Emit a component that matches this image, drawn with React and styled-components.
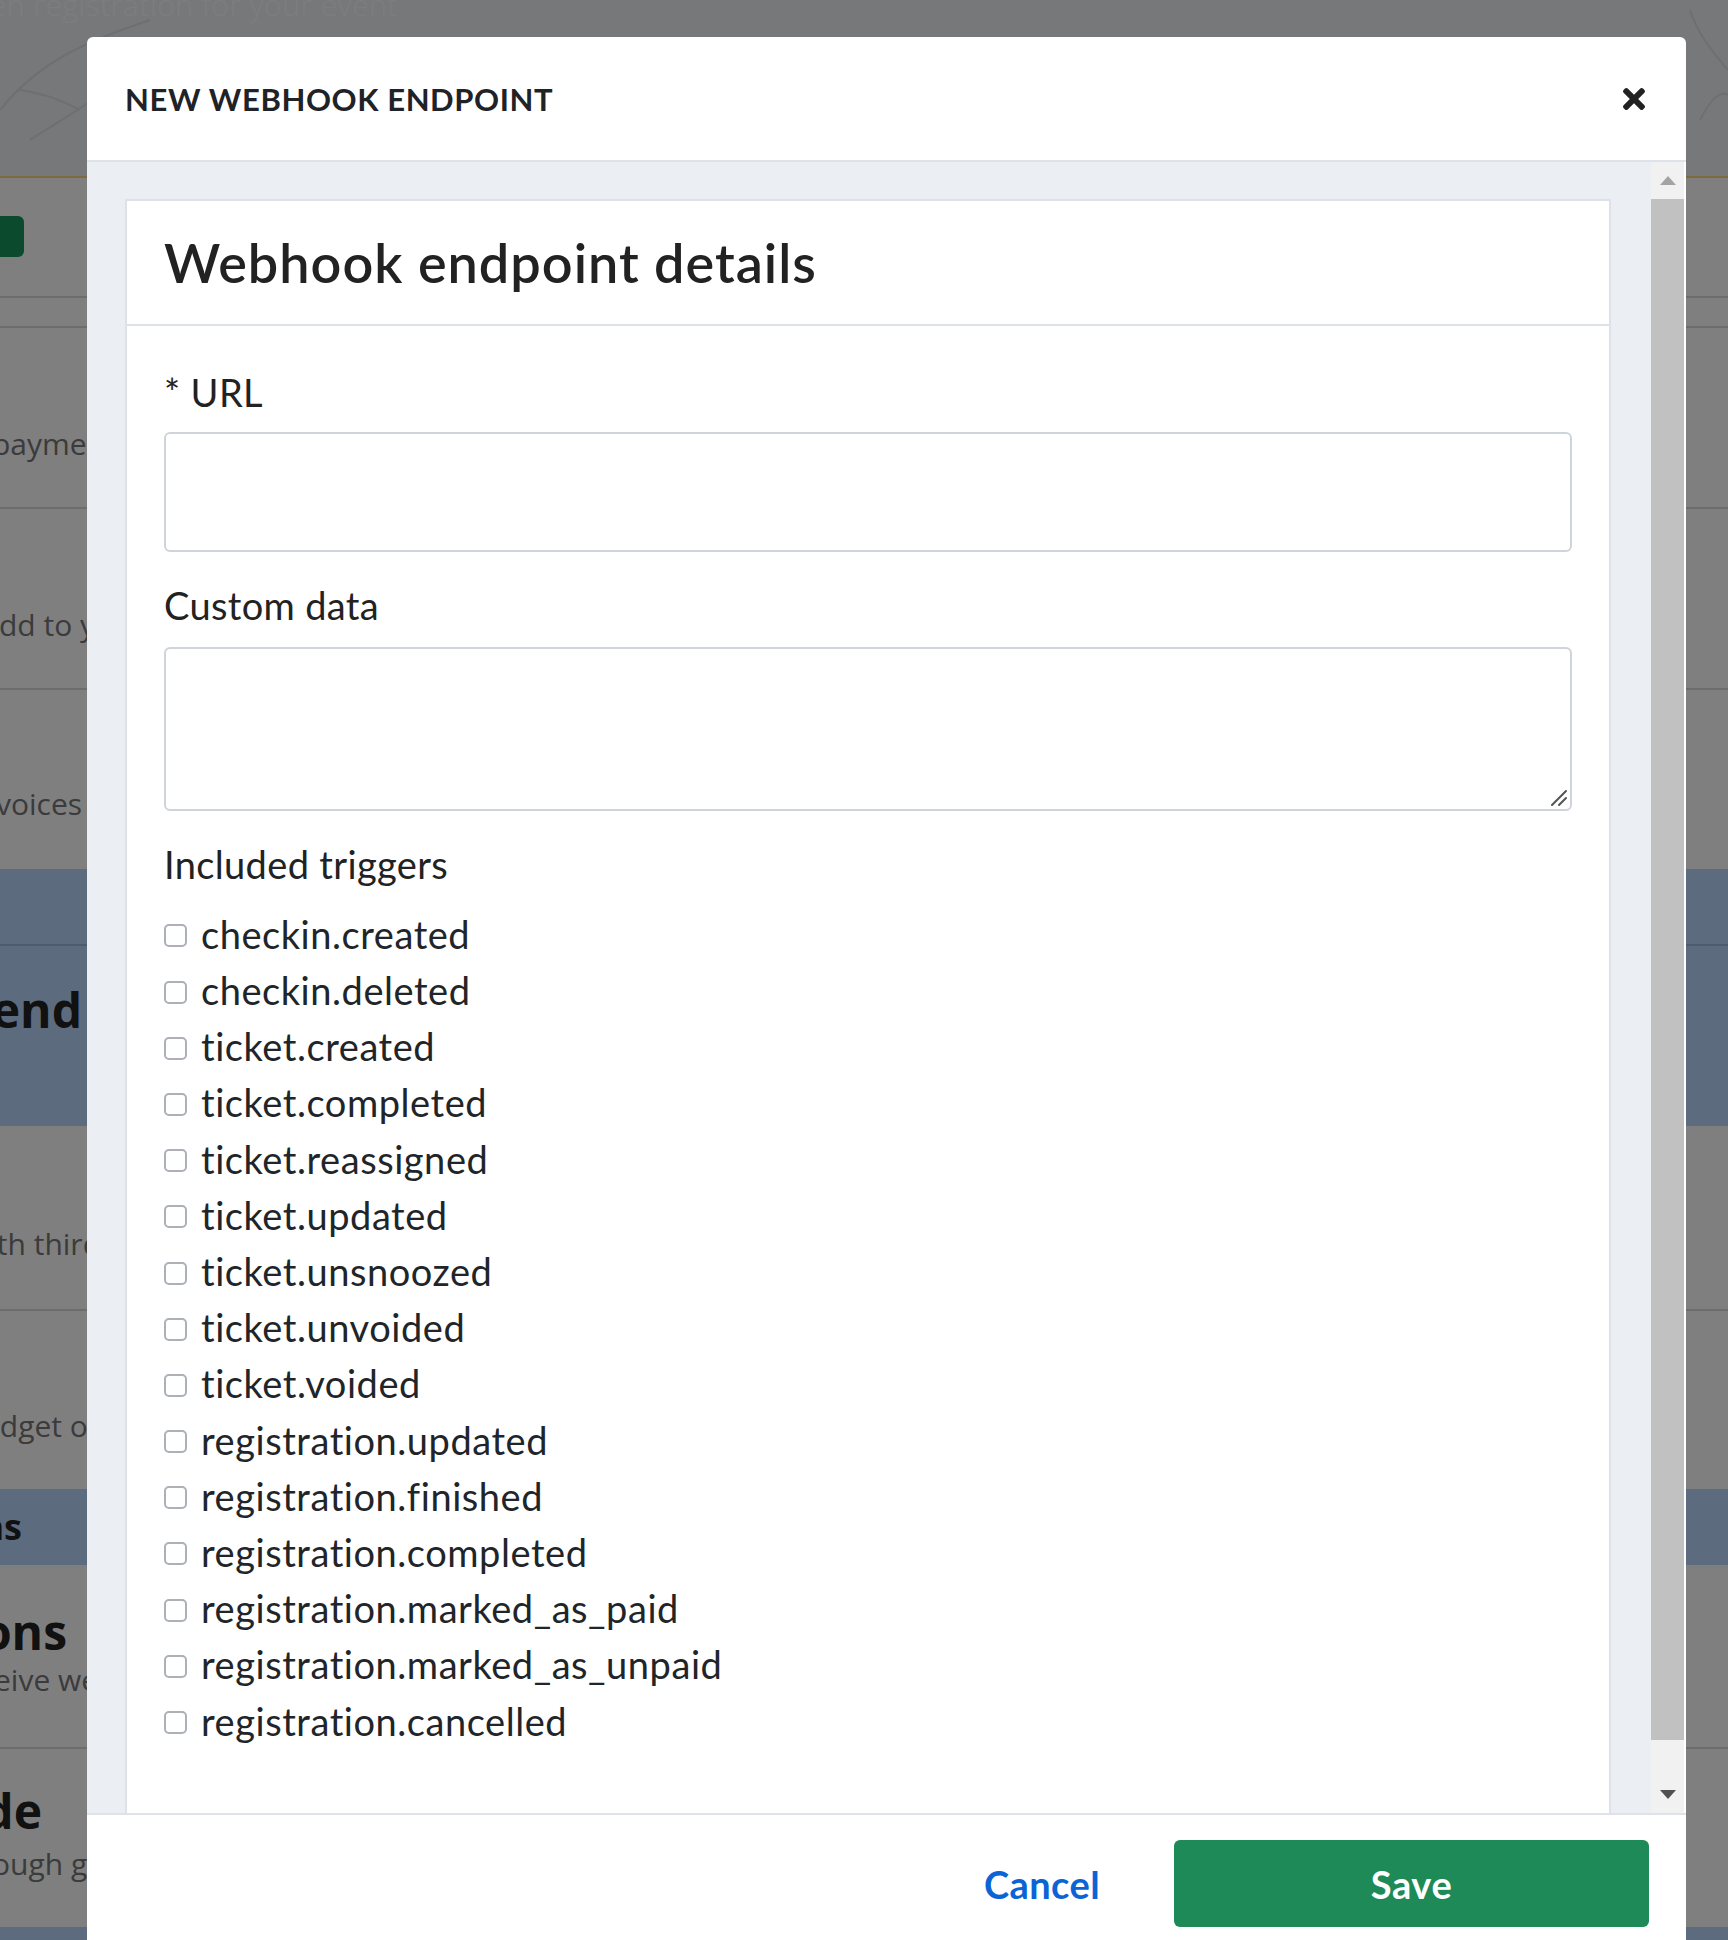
import React from 'react'
import styled, { createGlobalStyle } from 'styled-components'

const GlobalStyle = createGlobalStyle`
    html, body {
        margin: 0;
        padding: 0;
    }
    body {
        width: 1728px;
        height: 1940px;
        overflow: hidden;
        font-family: Lato, "Noto Sans", sans-serif;
    }
    * {
        box-sizing: border-box;
    }
`

/* ---------- page behind the dialog ---------- */

const Page = styled.div`
    position: relative;
    width: 1728px;
    height: 1940px;
    overflow: hidden;
    background: #fff;
    font-family: "Open Sans", sans-serif;
`

const TopBand = styled.div`
    height: 178px;
    background: #eef0f4;
    border-bottom: 2px solid #ffd478;
    overflow: hidden;
    position: relative;
`

const BandText = styled.div`
    margin-top: -16px;
    margin-left: -52px;
    font-size: 30px;
    font-weight: 300;
    letter-spacing: 0.5px;
    color: #fafbfc;
    white-space: nowrap;
`

const Row = styled.div`
    height: ${props => props.h}px;
    padding-top: ${props => props.pad || 0}px;
    background: ${props => (props.blue ? '#bad6ff' : '#fff')};
    border-bottom: ${props => (props.line ? '2px solid rgba(0, 0, 0, 0.14)' : 'none')};
    display: flex;
    flex-direction: column;
    overflow: hidden;
`

const GhostButton = styled.div`
    margin-top: 38px;
    margin-left: -176px;
    width: 200px;
    height: 41px;
    border-radius: 6px;
    background: #18945c;
`

const Desc = styled.div`
    font-size: 30px;
    line-height: 30px;
    color: #777;
    white-space: nowrap;
    margin-left: ${props => props.shift || 0}px;
    margin-top: ${props => props.gap || 0}px;
`

const Heading = styled.div`
    font-size: ${props => props.size || 48}px;
    line-height: ${props => (props.size || 48) + 8}px;
    font-weight: 700;
    color: #222;
    white-space: nowrap;
    width: 600px;
    text-align: right;
    margin-left: ${props => props.end - 600}px;
`

const Backdrop = styled.div`
    position: absolute;
    inset: 0;
    background: rgba(0, 0, 0, 0.5);
`

/* ---------- dialog ---------- */

const Modal = styled.div`
    position: absolute;
    left: 87px;
    top: 37px;
    width: 1599px;
    height: 1960px;
    background: #fff;
    border-radius: 6px 6px 0 0;
    display: flex;
    flex-direction: column;
    overflow: hidden;
    font-family: Lato, "Noto Sans", sans-serif;
    color: #212529;
`

const ModalHeader = styled.div`
    height: 125px;
    flex-shrink: 0;
    border-bottom: 2px solid #dee2ea;
    display: flex;
    align-items: center;
    justify-content: space-between;
    padding: 0 41px 0 38px;
`

const ModalTitle = styled.h2`
    margin: 0;
    font-size: 31px;
    font-weight: 700;
    letter-spacing: 0.6px;
    text-transform: uppercase;
    color: #1f2226;
`

const CloseButton = styled.button`
    border: none;
    background: none;
    padding: 0;
    width: 22px;
    height: 22px;
    display: flex;
    cursor: pointer;
    color: #222;
`

const ModalBody = styled.div`
    height: 1651px;
    flex-shrink: 0;
    display: flex;
    background: #ebeef3;
    overflow: hidden;
`

const ScrollArea = styled.div`
    flex: 1;
    padding: 37px 40px 0 38px;
    overflow: hidden;
`

const Scrollbar = styled.div`
    width: 35px;
    border-right: 2px solid #fff;
    display: flex;
    flex-direction: column;
    background: #f1f1f1;
`

const ScrollButton = styled.div`
    height: 37px;
    display: flex;
    align-items: center;
    justify-content: center;
`

const Arrow = styled.span`
    width: 0;
    height: 0;
    border-left: 8px solid transparent;
    border-right: 8px solid transparent;
    ${props => (props.down
        ? `border-top: 9px solid ${props.color};`
        : `border-bottom: 9px solid ${props.color};`)}
`

const Thumb = styled.div`
    height: 1541px;
    background: #c1c1c1;
`

const Track = styled.div`
    flex: 1;
`

const Card = styled.div`
    background: #fff;
    border: 2px solid #dde2ea;
`

const CardHeader = styled.div`
    height: 125px;
    border-bottom: 2px solid #dde2ea;
    display: flex;
    align-items: center;
    padding: 0 37px;
`

const CardTitle = styled.h3`
    margin: 0;
    font-size: 54px;
    font-weight: 600;
    letter-spacing: 1px;
    color: #222;
`

const CardBody = styled.div`
    padding: 0 37px 80px;
`

const Label = styled.label`
    display: block;
    font-size: 38px;
    line-height: 45.6px;
    letter-spacing: 0.35px;
    color: #222;
    margin-top: ${props => props.top}px;
    margin-bottom: ${props => props.bottom}px;
`

const TextInput = styled.input`
    display: block;
    width: 100%;
    height: 120px;
    border: 2px solid #cfd4da;
    border-radius: 6px;
    background: #fff;
    font: inherit;
    font-size: 35px;
    padding: 0 20px;
    outline: none;
`

const AreaWrap = styled.div`
    position: relative;
`

const TextArea = styled.textarea`
    display: block;
    width: 100%;
    height: 164px;
    border: 2px solid #cfd4da;
    border-radius: 6px;
    background: #fff;
    font: inherit;
    font-size: 35px;
    padding: 14px 20px;
    resize: none;
    outline: none;
`

const Grip = styled.svg`
    position: absolute;
    right: 5px;
    bottom: 5px;
    width: 18px;
    height: 18px;
`

const TriggerList = styled.div`
    margin-top: 18px;
    display: flex;
    flex-direction: column;
`

const TriggerRow = styled.label`
    height: 56.2px;
    display: flex;
    align-items: center;
    gap: 14px;
    font-size: 38px;
    letter-spacing: 0.55px;
    color: #212529;
    cursor: pointer;
`

const Checkbox = styled.input.attrs({ type: 'checkbox' })`
    appearance: none;
    margin: 4px 0 0;
    width: 23px;
    height: 23px;
    flex-shrink: 0;
    border: 2px solid #abb1b7;
    border-radius: 5px;
    background: #fff;
`

const ModalFooter = styled.div`
    border-top: 2px solid #dee2ea;
    display: flex;
    justify-content: flex-end;
    align-items: center;
    padding: 25px 37px;
`

const CancelButton = styled.button`
    border: none;
    background: none;
    padding: 0;
    margin-right: 74px;
    font-family: inherit;
    font-size: 38px;
    font-weight: 700;
    letter-spacing: 0.4px;
    color: #0b64d6;
    cursor: pointer;
`

const SaveButton = styled.button`
    width: 475px;
    height: 87px;
    border: none;
    border-radius: 6px;
    background: #1e8a57;
    color: #fff;
    font-family: inherit;
    font-size: 38px;
    font-weight: 700;
    letter-spacing: 0.6px;
    cursor: pointer;
`

const triggers = [
    'checkin.created',
    'checkin.deleted',
    'ticket.created',
    'ticket.completed',
    'ticket.reassigned',
    'ticket.updated',
    'ticket.unsnoozed',
    'ticket.unvoided',
    'ticket.voided',
    'registration.updated',
    'registration.finished',
    'registration.completed',
    'registration.marked_as_paid',
    'registration.marked_as_unpaid',
    'registration.cancelled'
]

function BackgroundPage() {
    return (
        <>
            <TopBand>
                <BandText>Open registration for your event</BandText>
                <svg width="1728" height="150" style={{ position: 'absolute', left: 0, top: 0 }} fill="none" stroke="#dcdfe4" strokeWidth="2">
                    <path d="M0 110 C40 60 90 40 150 20 M30 140 C60 120 100 100 140 60 M20 90 C50 95 60 100 80 110" />
                    <path d="M1690 10 C1700 40 1720 60 1728 70 M1700 120 C1710 100 1720 90 1728 95" />
                </svg>
            </TopBand>
            <Row h={120} line>
                <GhostButton />
            </Row>
            <Row h={30} line />
            <Row h={181} pad={101} line>
                <Desc shift={-8}>payments online</Desc>
            </Row>
            <Row h={181} pad={101} line>
                <Desc shift={-20}>Add to your website</Desc>
            </Row>
            <Row h={179} pad={99}>
                <Desc shift={-30}>invoices and receipts</Desc>
            </Row>
            <Row h={77} blue line />
            <Row h={180} pad={36} blue>
                <Heading end={82}>Backend</Heading>
            </Row>
            <Row h={185} pad={103} line>
                <Desc shift={-34}>with third parties</Desc>
            </Row>
            <Row h={178} pad={100}>
                <Desc shift={-31}>widget on your site</Desc>
            </Row>
            <Row h={76} pad={16} blue>
                <Heading end={22} size={36}>Integrations</Heading>
            </Row>
            <Row h={184} pad={39} line>
                <Heading end={67}>Notifications</Heading>
                <Desc shift={-6} gap={5}>eive webhooks</Desc>
            </Row>
            <Row h={178} pad={34}>
                <Heading end={42}>Guide</Heading>
                <Desc shift={-8} gap={10}>ough guides</Desc>
            </Row>
            <Row h={100} blue />
        </>
    )
}

export default function App() {
    return (
        <Page>
            <GlobalStyle />
            <BackgroundPage />
            <Backdrop />
            <Modal role="dialog">
                <ModalHeader>
                    <ModalTitle>New webhook endpoint</ModalTitle>
                    <CloseButton aria-label="Close">
                        <svg viewBox="0 80 352 352" width="22" height="22" fill="currentColor">
                            <path d="M242.72 256l100.07-100.07c12.28-12.28 12.28-32.19 0-44.48l-22.24-22.24c-12.28-12.28-32.19-12.28-44.48 0L176 189.28 75.93 89.21c-12.28-12.28-32.19-12.28-44.48 0L9.21 111.45c-12.28 12.28-12.28 32.19 0 44.48L109.28 256 9.21 356.07c-12.28 12.28-12.28 32.19 0 44.48l22.24 22.24c12.28 12.28 32.2 12.28 44.48 0L176 322.72l100.07 100.07c12.28 12.28 32.2 12.28 44.48 0l22.24-22.24c12.28-12.28 12.28-32.19 0-44.48L242.72 256z" />
                        </svg>
                    </CloseButton>
                </ModalHeader>
                <ModalBody>
                    <ScrollArea>
                        <Card>
                            <CardHeader>
                                <CardTitle>Webhook endpoint details</CardTitle>
                            </CardHeader>
                            <CardBody>
                                <Label top={44} bottom={16}>* URL</Label>
                                <TextInput type="text" />
                                <Label top={31} bottom={19}>Custom data</Label>
                                <AreaWrap>
                                    <TextArea />
                                    <Grip viewBox="0 0 18 18" fill="none" stroke="#555" strokeWidth="2" strokeLinecap="round">
                                        <path d="M3 17 L17 3 M10 17 L17 10" />
                                    </Grip>
                                </AreaWrap>
                                <Label top={31} bottom={0}>Included triggers</Label>
                                <TriggerList>
                                    {triggers.map(name => (
                                        <TriggerRow key={name}>
                                            <Checkbox />
                                            {name}
                                        </TriggerRow>
                                    ))}
                                </TriggerList>
                            </CardBody>
                        </Card>
                    </ScrollArea>
                    <Scrollbar>
                        <ScrollButton>
                            <Arrow color="#a3a3a3" />
                        </ScrollButton>
                        <Thumb />
                        <Track />
                        <ScrollButton>
                            <Arrow down color="#505050" />
                        </ScrollButton>
                    </Scrollbar>
                </ModalBody>
                <ModalFooter>
                    <CancelButton>Cancel</CancelButton>
                    <SaveButton>Save</SaveButton>
                </ModalFooter>
            </Modal>
        </Page>
    )
}
